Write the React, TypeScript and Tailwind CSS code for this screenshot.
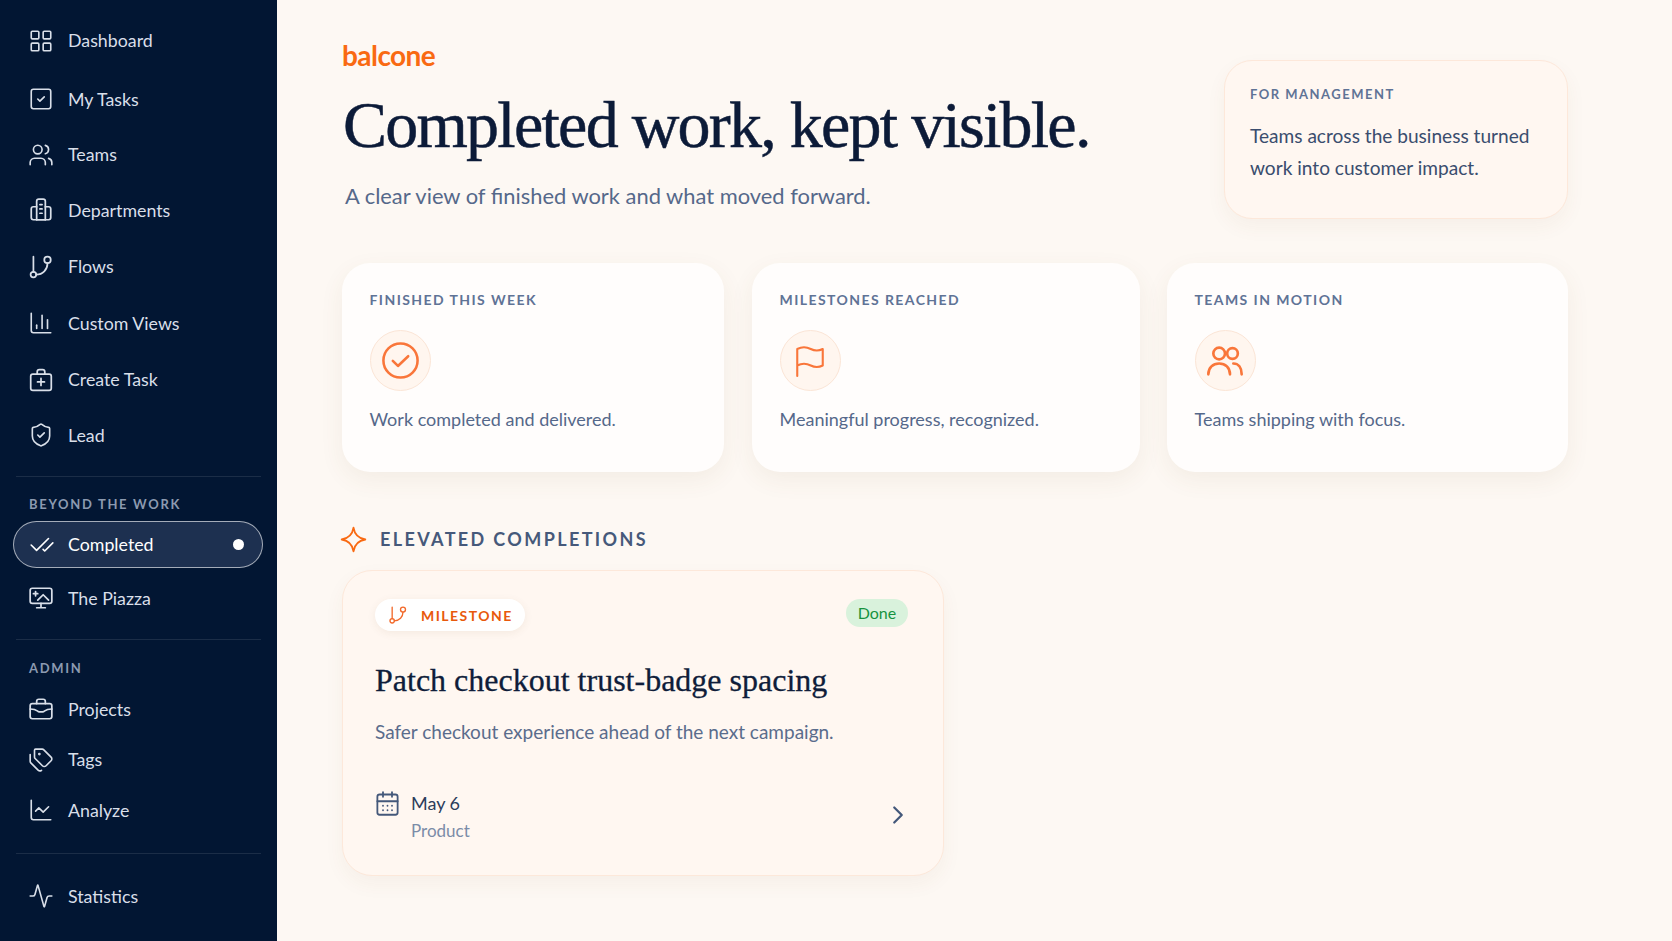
import type { ReactNode } from "react";
import {
  Activity,
  CalendarDays,
  ChartColumn,
  ChartLine,
  CheckCheck,
  ChevronRight,
  LayoutGrid,
  ShieldCheck,
  SquareCheck,
  Tags,
  Users,
} from "lucide-react";

const Stroke = ({
  className,
  width = 1.6,
  children,
}: {
  className?: string;
  width?: number;
  children: ReactNode;
}) => (
  <svg
    viewBox="0 0 24 24"
    fill="none"
    stroke="currentColor"
    strokeWidth={width}
    strokeLinecap="round"
    strokeLinejoin="round"
    className={className}
  >
    {children}
  </svg>
);

const DepartmentsIcon = ({ className }: { className?: string }) => (
  <Stroke className={className}>
    <path d="M8 21V4a2 2 0 0 1 2-2h4a2 2 0 0 1 2 2v17" />
    <path d="M8 9H5a2 2 0 0 0-2 2v8a2 2 0 0 0 2 2h14a2 2 0 0 0 2-2v-8a2 2 0 0 0-2-2h-3" />
    <path d="M11 7h2M11 11h2M11 15h2M8 21h8" />
  </Stroke>
);

const FlowIcon = ({ className }: { className?: string }) => (
  <Stroke className={className}>
    <path d="M5 16.5V2.5" />
    <circle cx="5" cy="19" r="2.6" />
    <circle cx="18" cy="5.5" r="3" />
    <path d="M7.6 19c6 0 10.4-4.5 10.4-10.5" />
  </Stroke>
);

const CreateTaskIcon = ({ className }: { className?: string }) => (
  <Stroke className={className}>
    <rect x="2.500" y="6.500" width="19" height="15" rx="2" />
    <path d="M8.500 6.500V4.500a2 2 0 0 1 2-2h3a2 2 0 0 1 2 2v2" />
    <path d="M12 10.500v6.500M8.800 13.800h6.400" />
  </Stroke>
);

const PiazzaIcon = ({ className }: { className?: string }) => (
  <Stroke className={className}>
    <rect x="2" y="3" width="20" height="14" rx="2" />
    <path d="M12 17v4M8 21h8" />
    <path d="M7 6v4M5 8h4" />
    <path d="M9 14l5-5 5 5" />
  </Stroke>
);

const ProjectsIcon = ({ className }: { className?: string }) => (
  <Stroke className={className}>
    <rect x="2" y="7" width="20" height="14" rx="2" />
    <path d="M8 7V5a2 2 0 0 1 2-2h4a2 2 0 0 1 2 2v2" />
    <path d="M2 12c3 0 5 .5 7 2 1.5 1 4.5 1 6 0 2-1.500 4-2 7-2" />
  </Stroke>
);

const TeamIcon = ({ className }: { className?: string }) => (
  <Stroke className={className}>
    <circle cx="8.500" cy="7.500" r="3.500" />
    <circle cx="16.500" cy="7.500" r="3.200" />
    <path d="M2 20c0-4 2.800-6.500 6.500-6.500S15 16 15 20" />
    <path d="M17 13.500c3 0 5 2.500 5 6.500" />
  </Stroke>
);

const CheckRingIcon = ({ className }: { className?: string }) => (
  <Stroke className={className} width={1.5}>
    <circle cx="12" cy="12" r="10" />
    <path d="M7.500 12.200l3 3 6-5.700" />
  </Stroke>
);

const WaveFlagIcon = ({ className }: { className?: string }) => (
  <Stroke className={className} width={1.4}>
    <path d="M3.500 22V4c4-2 7-1 9 0s5 1.500 8 0v11c-3 1.500-6 1-8 0s-5-2-9 0" />
  </Stroke>
);

const SparkIcon = ({ className }: { className?: string }) => (
  <Stroke className={className}>
    <path d="M12 1.500C13 8 16 11 22.500 12 16 13 13 16 12 22.500 11 16 8 13 1.500 12 8 11 11 8 12 1.500Z" />
  </Stroke>
);

const iconClass = "w-[26px] h-[26px] shrink-0";

const mainLinks = [
  { label: "Dashboard", gap: "", icon: <LayoutGrid className={iconClass} strokeWidth={1.5} /> },
  { label: "My Tasks", gap: "mt-[8.5px]", icon: <SquareCheck className={iconClass} strokeWidth={1.5} /> },
  { label: "Teams", gap: "mt-[5.5px]", icon: <Users className={iconClass} strokeWidth={1.5} /> },
  { label: "Departments", gap: "mt-[5.5px]", icon: <DepartmentsIcon className={iconClass} /> },
  { label: "Flows", gap: "mt-[6.5px]", icon: <FlowIcon className={iconClass} /> },
  { label: "Custom Views", gap: "mt-[6.5px]", icon: <ChartColumn className={iconClass} strokeWidth={1.5} /> },
  { label: "Create Task", gap: "mt-[6.5px]", icon: <CreateTaskIcon className={iconClass} /> },
  { label: "Lead", gap: "mt-[5.5px]", icon: <ShieldCheck className={iconClass} strokeWidth={1.5} /> },
];

const adminLinks = [
  { label: "Projects", icon: <ProjectsIcon className={iconClass} /> },
  { label: "Tags", icon: <Tags className={iconClass} strokeWidth={1.5} /> },
  { label: "Analyze", icon: <ChartLine className={iconClass} strokeWidth={1.5} /> },
];

const stats = [
  {
    label: "FINISHED THIS WEEK",
    text: "Work completed and delivered.",
    icon: <CheckRingIcon className="w-[41px] h-[41px]" />,
  },
  {
    label: "MILESTONES REACHED",
    text: "Meaningful progress, recognized.",
    icon: <WaveFlagIcon className="w-[36px] h-[36px]" />,
  },
  {
    label: "TEAMS IN MOTION",
    text: "Teams shipping with focus.",
    icon: <TeamIcon className="w-[40px] h-[40px]" />,
  },
];

function NavRow({ label, icon, className }: { label: string; icon: ReactNode; className: string }) {
  return (
    <a className={`flex items-center gap-[14px] pl-[28px] text-[17.8px] text-[#d9dfe9] ${className}`}>
      {icon}
      <span>{label}</span>
    </a>
  );
}

function Sidebar() {
  return (
    <aside className="w-[277px] h-[941px] shrink-0 bg-[#021633] pt-[15.5px] overflow-hidden">
      {mainLinks.map((link) => (
        <NavRow key={link.label} label={link.label} icon={link.icon} className={`h-[50px] ${link.gap}`} />
      ))}

      <div className="mx-[16px] mt-[16px] border-t border-white/10" />
      <div className="pl-[29px] mt-[18px] text-[13px] leading-[18px] font-bold tracking-[0.13em] text-[#8c9ab0]">
        BEYOND THE WORK
      </div>
      <a className="ml-[13px] mr-[14px] mt-[8px] h-[47px] flex items-center rounded-full border border-white/60 bg-[#1d3050] pl-[15px] pr-[18px] text-[17.8px] text-white">
        <CheckCheck className={iconClass} strokeWidth={1.5} />
        <span className="ml-[13px]">Completed</span>
        <span className="ml-auto w-[11px] h-[11px] rounded-full bg-white" />
      </a>
      <div className="mt-[6px]">
        <NavRow label="The Piazza" icon={<PiazzaIcon className={iconClass} />} className="h-[48px]" />
      </div>

      <div className="mx-[16px] mt-[17px] border-t border-white/10" />
      <div className="pl-[29px] mt-[19px] text-[13px] leading-[18px] font-bold tracking-[0.13em] text-[#8c9ab0]">
        ADMIN
      </div>
      <div className="mt-[7px]">
        {adminLinks.map((link) => (
          <NavRow key={link.label} label={link.label} icon={link.icon} className="h-[50.5px]" />
        ))}
      </div>

      <div className="mx-[16px] mt-[17.5px] border-t border-white/10" />
      <div className="mt-[18px]">
        <NavRow label="Statistics" icon={<Activity className={iconClass} strokeWidth={1.5} />} className="h-[48px]" />
      </div>
    </aside>
  );
}

function StatCard({ label, text, icon, width }: { label: string; text: string; icon: ReactNode; width: string }) {
  return (
    <div
      className={`${width} h-[209px] rounded-[28px] bg-[#fffdfc] shadow-[0_8px_24px_rgba(120,80,40,0.07)] pl-[27.5px] pt-[28px]`}
    >
      <div className="text-[14px] leading-[18px] font-bold tracking-[0.102em] text-[#5f7396]">{label}</div>
      <div className="mt-[21px] w-[61px] h-[61px] rounded-full flex items-center justify-center border border-[#fbe5d6] bg-[#fff6ef] text-[#f9763a]">
        {icon}
      </div>
      <div className="mt-[16px] text-[18px] leading-[24px] text-[#55688a]">{text}</div>
    </div>
  );
}

export default function App() {
  return (
    <div className="flex w-[1672px] h-[941px] overflow-hidden bg-[#fdf8f3] font-['Lato',sans-serif]">
      <Sidebar />
      <main className="flex-1 pl-[65px] pr-[104px]">
        <header className="flex justify-between h-[263px]">
          <div className="pt-[39px]">
            <div className="text-[28px] leading-[32px] font-bold tracking-[-0.02em] text-[#f96a12]">balcone</div>
            <h1 className="mt-[16px] ml-[1px] font-['Liberation_Serif',serif] [-webkit-text-stroke:0.5px] text-[66px] leading-[76px] tracking-[-0.0265em] text-[#0c1b38]">
              Completed work, kept visible.
            </h1>
            <p className="mt-[19px] ml-[3px] text-[21.9px] leading-[28px] text-[#55688a]">
              A clear view of finished work and what moved forward.
            </p>
          </div>
          <div className="mt-[60px] w-[344px] h-[159px] rounded-[28px] border border-[#fde8da] bg-[#fff7f1] shadow-[0_8px_20px_rgba(120,80,40,0.05)] pl-[25px] pt-[24px]">
            <div className="text-[13px] leading-[18px] font-bold tracking-[0.115em] text-[#5f7396]">FOR MANAGEMENT</div>
            <p className="mt-[17px] text-[19.1px] leading-[32px] text-[#3a4d6e]">
              Teams across the business turned
              <br />
              work into customer impact.
            </p>
          </div>
        </header>

        <section className="flex gap-[28px]">
          <StatCard {...stats[0]} width="w-[382px]" />
          <StatCard {...stats[1]} width="w-[388px]" />
          <div className="-ml-[1px]">
            <StatCard {...stats[2]} width="w-[401px]" />
          </div>
        </section>

        <div className="mt-[54px] -ml-[2px] flex items-center gap-[13px]">
          <SparkIcon className="w-[27px] h-[27px] text-[#f96a12]" />
          <h2 className="text-[18px] leading-[27px] font-bold tracking-[0.132em] text-[#46597a]">
            ELEVATED COMPLETIONS
          </h2>
        </div>

        <article className="mt-[17px] w-[602px] h-[306px] rounded-[30px] border border-[#fde8da] bg-[#fff7f1] shadow-[0_8px_20px_rgba(120,80,40,0.05)] pl-[32px] pr-[35px] pt-[28px]">
          <div className="flex items-start justify-between">
            <span className="h-[32px] w-[150px] flex items-center gap-[13px] pl-[13px] rounded-full bg-white shadow-[0_2px_8px_rgba(120,80,40,0.08)] text-[14px] font-bold tracking-[0.105em] text-[#e8590c]">
              <FlowIcon className="w-[20px] h-[20px] text-[#f2692a]" />
              MILESTONE
            </span>
            <span className="h-[28px] w-[62px] flex items-center justify-center rounded-full bg-[#d9f2dc] text-[16px] text-[#16923f]">
              Done
            </span>
          </div>
          <h3 className="mt-[29px] font-['Liberation_Serif',serif] [-webkit-text-stroke:0.3px] text-[32px] leading-[40px] text-[#0f1d3a]">
            Patch checkout trust-badge spacing
          </h3>
          <p className="mt-[19px] text-[19px] leading-[26px] text-[#5a6c8c]">
            Safer checkout experience ahead of the next campaign.
          </p>
          <div className="mt-[44px] flex items-center justify-between">
            <div className="flex items-start gap-[10px]">
              <CalendarDays className="w-[27px] h-[27px] -ml-[1px] mt-[1px] text-[#44587a]" strokeWidth={1.6} />
              <div>
                <div className="text-[18px] leading-[28px] text-[#2c3d5c]">May 6</div>
                <div className="text-[17px] leading-[28px] text-[#7b8ca8]">Product</div>
              </div>
            </div>
            <ChevronRight className="w-[30px] h-[30px] -mr-[5px] -mt-[4px] text-[#44587a]" strokeWidth={1.8} />
          </div>
        </article>
      </main>
    </div>
  );
}
